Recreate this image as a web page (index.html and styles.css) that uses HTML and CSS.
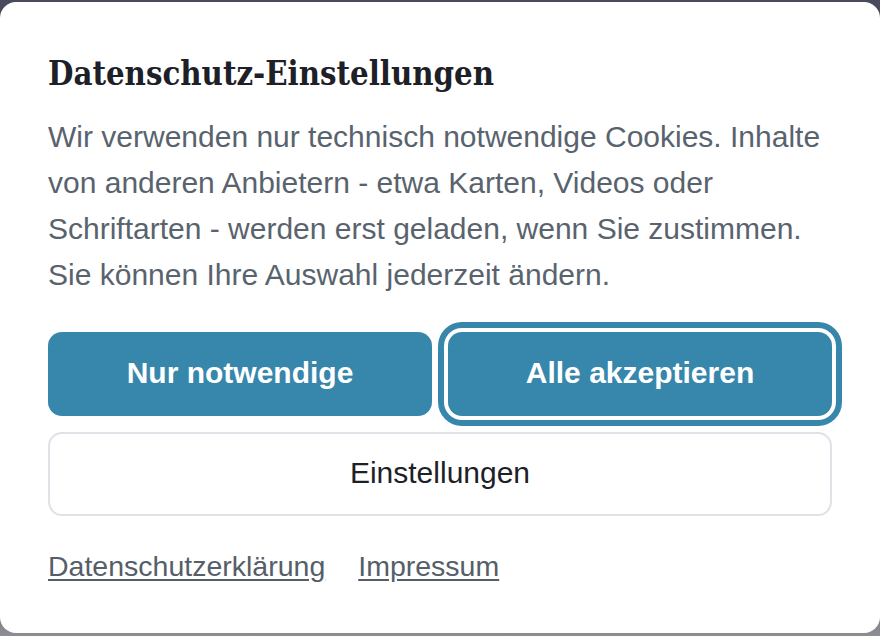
FILE: index.html
```html
<!DOCTYPE html>
<html lang="de">
<head>
<meta charset="utf-8">
<title>Datenschutz-Einstellungen</title>
<link rel="stylesheet" href="styles.css">
</head>
<body>
<div class="backdrop">
  <section class="dialog" role="dialog" aria-labelledby="cc-title">
    <h2 id="cc-title" class="title">Datenschutz-Einstellungen</h2>
    <p class="text">Wir verwenden nur technisch notwendige Cookies. Inhalte von anderen Anbietern - etwa Karten, Videos oder Schriftarten - werden erst geladen, wenn Sie zustimmen. Sie können Ihre Auswahl jederzeit ändern.</p>
    <div class="actions">
      <div class="row">
        <button class="btn btn-primary" type="button">Nur notwendige</button>
        <button class="btn btn-primary is-focused" type="button">Alle akzeptieren</button>
      </div>
      <button class="btn btn-secondary" type="button">Einstellungen</button>
    </div>
    <nav class="links">
      <a href="#" class="link">Datenschutzerklärung</a>
      <a href="#" class="link">Impressum</a>
    </nav>
  </section>
</div>
</body>
</html>
```

FILE: styles.css
```css
html, body {
  margin: 0;
  padding: 0;
  height: 100%;
}
body {
  background: linear-gradient(to bottom, #4a4a5d 0%, #4a4a5d 85%, #8d8d92 100%);
  overflow: hidden;
}
.backdrop {
  padding-top: 2px;
  height: 634px;
  box-sizing: border-box;
}
.dialog {
  background: #ffffff;
  border-radius: 16px;
  height: 631px;
  box-sizing: border-box;
  padding: 52px 48px 0 48px;
  font-family: "Liberation Sans", Arial, sans-serif;
}
.title {
  margin: 0;
  font-family: "DejaVu Serif Condensed", "DejaVu Serif", serif;
  font-stretch: condensed;
  font-weight: 700;
  font-size: 32.6px;
  line-height: 40px;
  color: #1d2127;
}
.text {
  margin: 20px 0 0 0;
  font-size: 30px;
  line-height: 46px;
  color: #59636e;
}
.actions {
  margin-top: 34px;
  display: flex;
  flex-direction: column;
  gap: 16px;
}
.row {
  display: flex;
  gap: 16px;
}
.btn {
  font-family: "Liberation Sans", Arial, sans-serif;
  font-size: 30px;
  height: 84px;
  border-radius: 14px;
  cursor: pointer;
  padding: 0 16px;
}
.btn-primary {
  flex: 1 1 0;
  background: #3786ac;
  color: #ffffff;
  font-weight: 700;
  border: none;
  padding-bottom: 3px;
}
.btn-primary.is-focused {
  box-shadow: 0 0 0 4px #ffffff, 0 0 0 10px #3786ac;
}
.btn-secondary {
  width: 100%;
  background: #ffffff;
  color: #1d2127;
  border: 2px solid #dfe2e6;
  font-weight: 400;
  padding-bottom: 2px;
}
.links {
  margin-top: 32px;
  display: flex;
  gap: 33px;
}
.link {
  font-size: 28.5px;
  line-height: 36px;
  color: #555e69;
  text-decoration: underline;
  text-underline-offset: 3px;
}
```
